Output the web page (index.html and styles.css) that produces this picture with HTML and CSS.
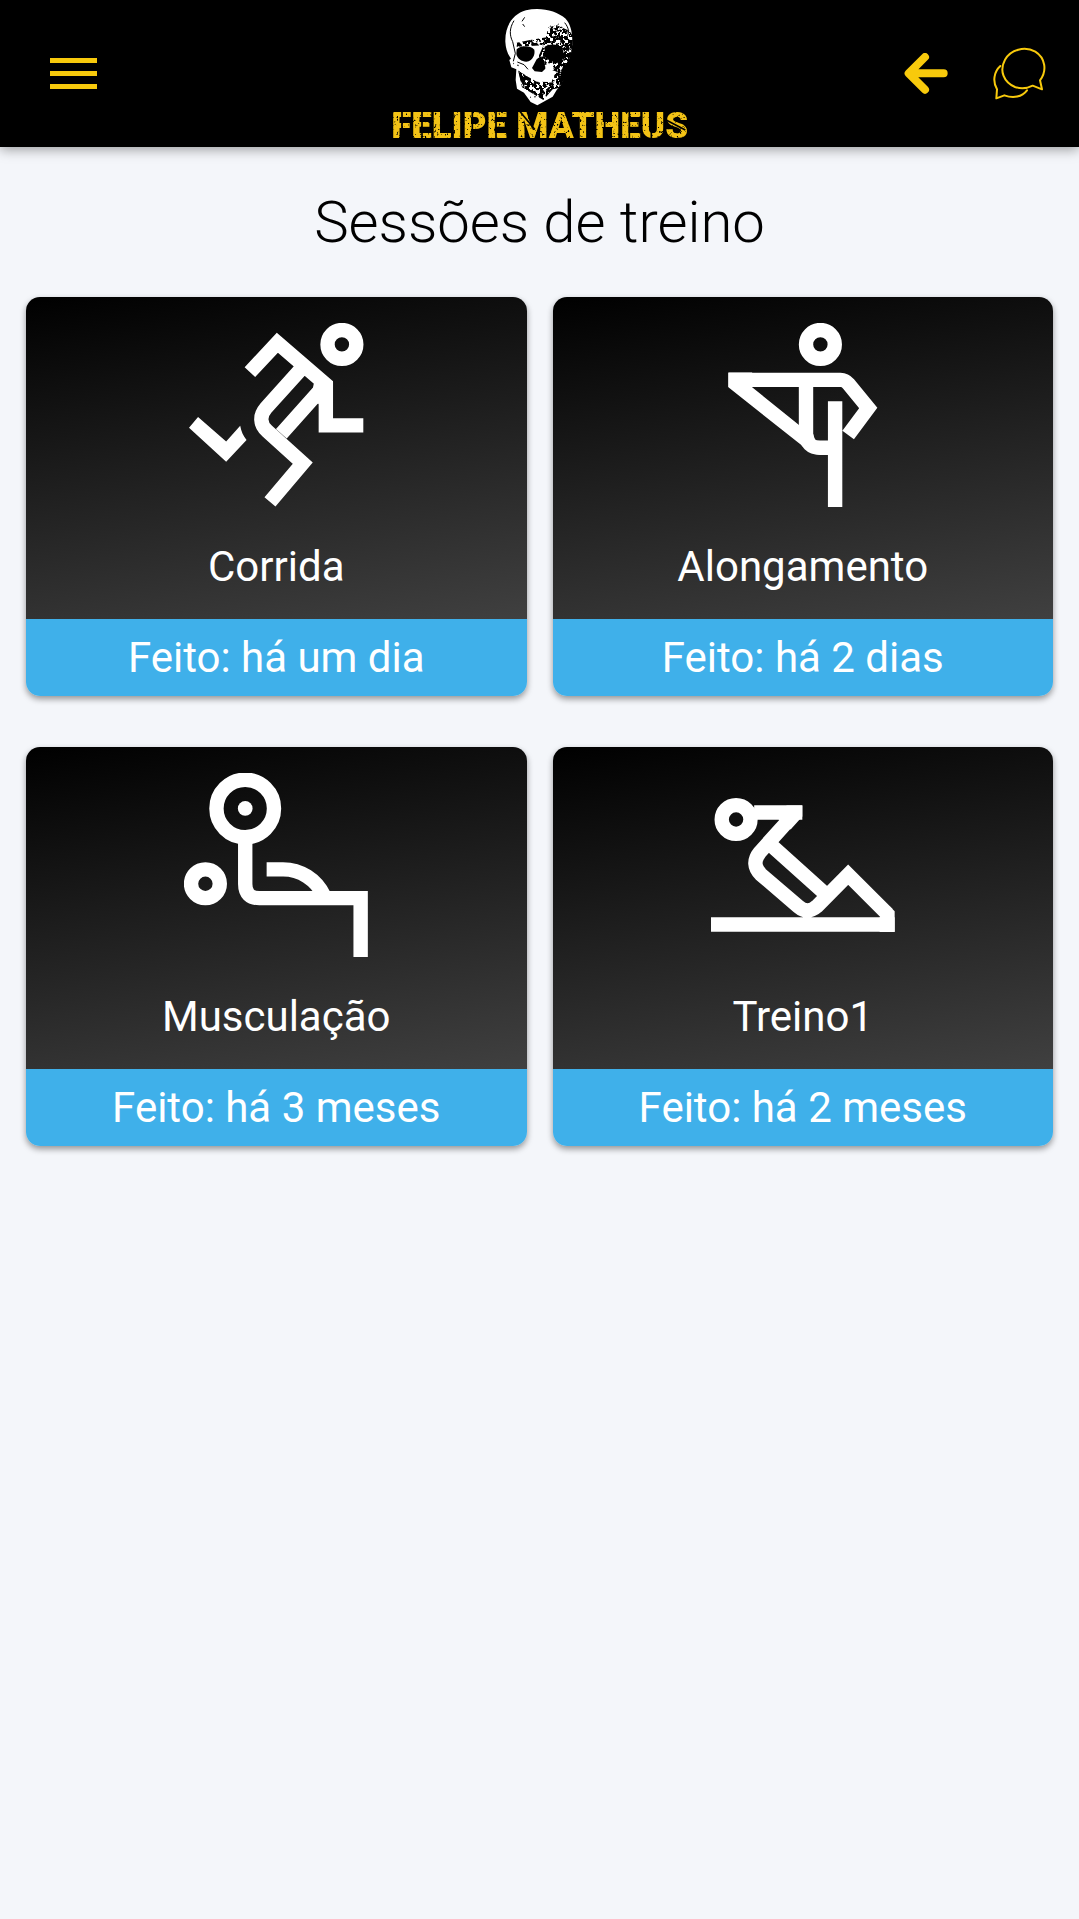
FILE: index.html
```
<!DOCTYPE html>
<html lang="pt-BR">
<head>
    <meta charset="UTF-8">
    <meta name="viewport" content="width=device-width, initial-scale=1.0">
    <title>Sessões de treino</title>
    <link rel="stylesheet" href="styles.css">
</head>
<body>

<header class="topbar">
    <button class="icon-btn menu-btn" type="button" aria-label="Menu">
        <svg width="47" height="32" viewBox="0 0 47 32">
            <path d="M0 0H47V5H0ZM0 13H47V18H0ZM0 26H47V31H0Z"/>
        </svg>
    </button>

    <!-- Logo -->
    <svg class="logo" viewBox="0 0 1020 441">
        <defs>
            <filter id="grunge" x="0" y="0" width="1" height="1">
                <feTurbulence type="fractalNoise" baseFrequency="0.14" numOctaves="2" seed="4" result="noise"/>
                <feColorMatrix in="noise" type="matrix" values="0 0 0 0 0  0 0 0 0 0  0 0 0 0 0  0 0 0 7 -4.3" result="spots"/>
                <feComposite in="SourceGraphic" in2="spots" operator="out"/>
            </filter>
            <filter id="flecks" x="0" y="0" width="1" height="1">
                <feTurbulence type="fractalNoise" baseFrequency="0.1" numOctaves="3" seed="9" result="noise"/>
                <feColorMatrix in="noise" type="matrix" values="0 0 0 0 0  0 0 0 0 0  0 0 0 0 0  0 0 0 14 -7" result="spots"/>
                <feComposite in="SourceGraphic" in2="spots" operator="out"/>
            </filter>
        </defs>
        <!-- caveira -->
        <path fill="#fff" d="M406 125C405 75 430 42 468 31C510 20 560 32 587 56C600 70 607 92 607 125C606 155 600 175 590 190L584 215L578 250L560 270L548 290L525 303L502 316L482 306L462 278L441 266L437 240L439 208L424 202L418 180L423 176C412 160 407 145 406 125Z"/>
        <g filter="url(#flecks)">
            <path d="M535 82L560 76L598 92L610 110L600 190L580 262L548 268L520 300L490 282L456 262L446 212L470 228L500 245L540 246L560 215L520 200L505 170L524 128ZM440 128L480 120L530 112L520 136L440 140Z"/>
        </g>
        <path d="M440 148C452 136 480 136 493 149C496 165 488 178 476 184C460 188 442 178 439 162ZM524 140C540 130 564 132 576 142C584 160 582 178 572 188C552 190 532 182 524 166ZM500 178L513 168L524 186L526 206L516 216L494 214L486 204ZM444 211L455 225L466 240L462 262L451 240ZM580 196L592 190L582 240L568 262L572 220Z"/>
        <path fill="none" stroke="#000" stroke-width="3" d="M432 62C418 85 418 105 428 125L436 160L430 184M584 68C598 85 598 100 590 112M442 186L462 194L474 208M464 52L456 64M458 72L464 80"/>
        <path fill="none" stroke="#000" stroke-width="4" stroke-dasharray="2 11 4 9 2 6" d="M540 78L562 92L576 86M564 72L600 104M452 134L520 122M430 190L454 200M480 292L530 286"/>
        <path fill="#fff" d="M524 196L536 190L550 200L546 214L532 212ZM484 222L500 216L530 220L552 226L553 238L520 242L492 238Z"/>
        <!-- nome -->
        <g filter="url(#grunge)">
            <text class="logo-text" x="509" y="415">FELIPE MATHEUS</text>
        </g>
        <path fill="none" stroke="#000" stroke-width="5" d="M96 332V420M156 332V420M307 332V420M378 332V420M778 332V420M448 332L494 388M704 360V396M844 390V420M884 358L946 390"/>
    </svg>

    <div class="topbar-actions">
        <button class="icon-btn" type="button" aria-label="Voltar">
            <svg width="44" height="42" viewBox="0 0 132 126">
                <path class="arrow" d="M63 12L14 61L63 110M16 61H119"/>
            </svg>
        </button>
        <button class="icon-btn" type="button" aria-label="Mensagens">
            <svg width="53" height="53" viewBox="339 81 159 159">
                <path class="chat" d="M480 181C502 152 496 114 466 95C434 77 392 89 375 119C357 152 371 187 405 201C422 207 442 205 458 197L486 208ZM361 138C342 155 337 184 351 208L349 235L373 226C400 236 426 231 441 211"/>
            </svg>
        </button>
    </div>
</header>

<main class="content">
    <h1>Sessões de treino</h1>

    <div class="sessions">
        <a class="card" href="#">
            <div class="card-body">
                <svg class="card-icon" viewBox="42 69 550 550">
                    <circle cx="514" cy="133" r="43"/>
                    <path d="M239 216L321 128L466 253V375H578M387 212L287 323C268 345 268 372 291 392L397 488L299 604M449 270L333 400"/>
                    <path class="fill" d="M84 350L168 423L210 376C213 393 219 406 229 419L168 484L57 382ZM430 250L487 243V300H445V312L420 300Z"/>
                </svg>
                <span class="card-name">Corrida</span>
            </div>
            <div class="card-status">Feito: há um dia</div>
        </a>

        <a class="card" href="#">
            <div class="card-body">
                <svg class="card-icon" viewBox="5 69 550 550">
                    <circle cx="332" cy="133" r="43"/>
                    <path d="M376 619V303M57 239H392Q406 239 416 251L475 323L415 404M289 240V400Q290 442 331 442H376"/>
                    <path class="fill" d="M57 217H128V261L268 374L310 400L331 463Q308 463 290 446L57 261Z"/>
                </svg>
                <span class="card-name">Alongamento</span>
            </div>
            <div class="card-status">Feito: há 2 dias</div>
        </a>

        <a class="card" href="#">
            <div class="card-body">
                <svg class="card-icon" viewBox="42 44 550 550">
                    <circle cx="225" cy="150" r="86"/>
                    <circle class="fill" cx="225" cy="150" r="22"/>
                    <circle cx="106" cy="375" r="43"/>
                    <path d="M225 245V376Q225 418 267 418H570V594M289 332H338C390 332 437 362 460 410"/>
                </svg>
                <span class="card-name">Musculação</span>
            </div>
            <div class="card-status">Feito: há 3 meses</div>
        </a>

        <a class="card" href="#">
            <div class="card-body">
                <svg class="card-icon" viewBox="36 44 550 550">
                    <circle cx="111" cy="183" r="43"/>
                    <path d="M36 497H585M564 466L446 348L352 443Q325 467 297 443L185 347Q154 316 182 281L260 194M165 162H309M218 262L374 402"/>
                    <path class="fill" d="M238 183L262 141H309V174L274 213ZM570 442L585 457V519H540V475Z"/>
                </svg>
                <span class="card-name">Treino1</span>
            </div>
            <div class="card-status">Feito: há 2 meses</div>
        </a>
    </div>
</main>

</body>
</html>
```

FILE: styles.css
```
body {
    margin: 0;
    background-color: #f4f6fa;
    font-family: Roboto, sans-serif;
}
.topbar {
    display: grid;
    grid-template-columns: 1fr auto 1fr;
    align-items: center;
    padding: 0 33px 0 50px;
    background-color: #000;
    box-shadow: 0 2px 12px rgba(0, 0, 0, 0.4);
}
.topbar svg {
    display: block;
}
.icon-btn {
    padding: 0;
    border: none;
    background: none;
    cursor: pointer;
    fill: #f8ca0c;
}
.menu-btn {
    justify-self: start;
}
.logo {
    width: 340px;
    height: 147px;
    margin-left: -17px;
}
.logo-text {
    font-family: Roboto, sans-serif;
    font-size: 110px;
    font-weight: 900;
    text-anchor: middle;
    fill: #f3c313;
}
.topbar-actions {
    display: flex;
    align-items: center;
    justify-content: flex-end;
    gap: 45px;
}
.arrow {
    fill: none;
    stroke: #f8ca0c;
    stroke-width: 24;
    stroke-linecap: round;
    stroke-linejoin: round;
}
.chat {
    fill: none;
    stroke: #f8ca0c;
    stroke-width: 6;
    stroke-linecap: round;
    stroke-linejoin: round;
}
.content {
    padding: 41px 26px;
}
h1 {
    margin: 0 0 41px;
    font-size: 58px;
    font-weight: 300;
    line-height: 68px;
    text-align: center;
    color: #000;
}
.sessions {
    display: grid;
    grid-template-columns: 1fr 1fr;
    gap: 51px 26px;
}
.card {
    overflow: hidden;
    border-radius: 14px;
    box-shadow: 0 3px 6px rgba(0, 0, 0, 0.4);
    color: #fff;
    font-size: 42px;
    text-align: center;
    text-decoration: none;
}
.card-body {
    display: flex;
    flex-direction: column;
    align-items: center;
    gap: 36px;
    padding: 26px 0 28px;
    background: linear-gradient(170deg, #000, #404040);
}
.card-icon {
    width: 184px;
    height: 184px;
    fill: none;
    stroke: #fff;
    stroke-width: 43;
}
.card-icon .fill {
    fill: #fff;
    stroke: none;
}
.card-name {
    line-height: 48px;
}
.card-status {
    line-height: 77px;
    background-color: #3fb0ea;
}
```
